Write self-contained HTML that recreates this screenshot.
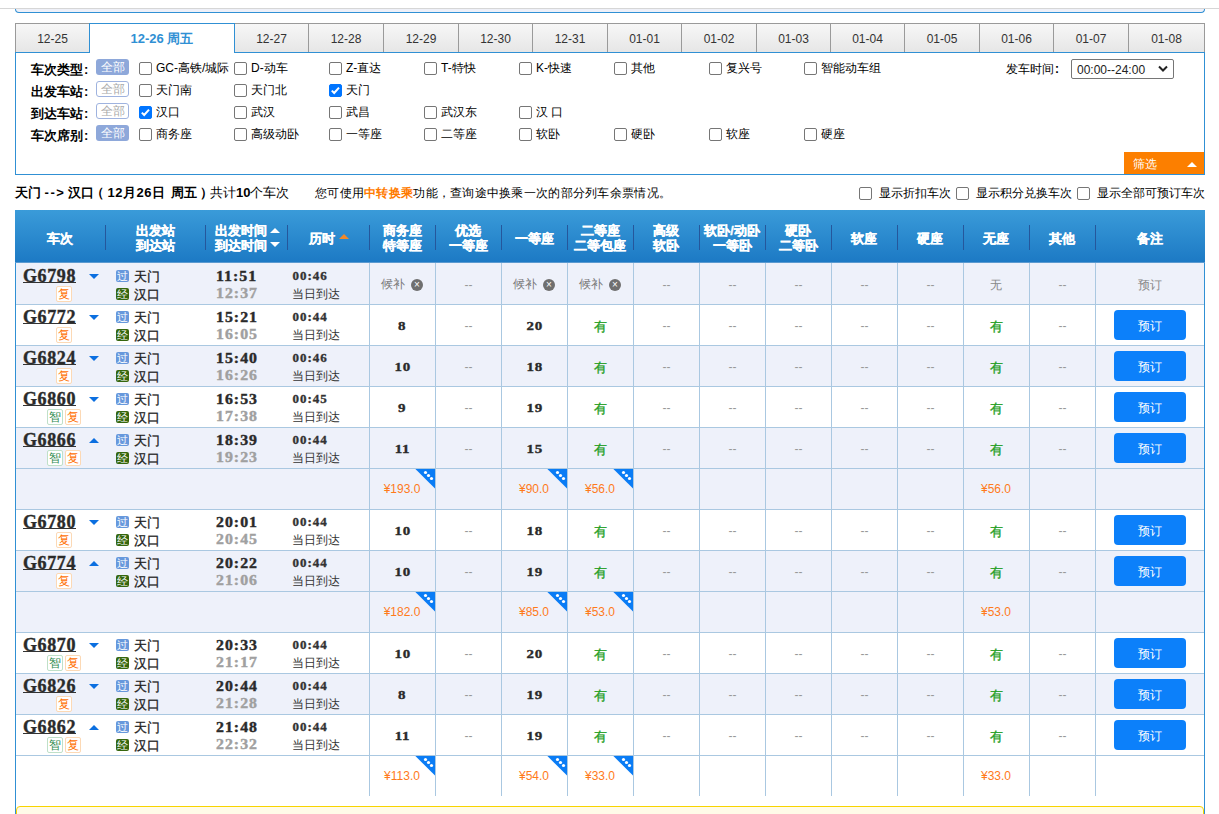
<!DOCTYPE html><html><head><meta charset='utf-8'><style>
*{margin:0;padding:0;box-sizing:border-box}
html,body{width:1219px;height:814px;overflow:hidden;background:#fff}
body{position:relative;font-family:'Liberation Sans',sans-serif;font-size:12px;color:#333}
.ab{position:absolute}
.tab{position:absolute;top:23px;height:29px;border-top:1px solid #9a9a9a;border-left:1px solid #9a9a9a;
 background:linear-gradient(#f7f7f7,#e6e6e6);text-align:center;line-height:30px;font-size:12px;color:#333}
.tab.act{background:#fff;border:1px solid #3090d4;border-bottom:none;height:30px;color:#3090d4;font-weight:bold;font-size:13px;z-index:2}
.lbl{position:absolute;left:30.5px;font-weight:bold;font-size:13px;color:#000;line-height:16px;letter-spacing:0px}
.all{position:absolute;left:96px;width:33px;height:16px;border-radius:3px;font-size:12px;line-height:16px;text-align:center}
.all.f{background:#8ea8da;color:#fff}
.all.o{border:1px solid #9fb3df;color:#aaa;line-height:14px}
.cb{position:absolute;width:13px;height:13px;border:1px solid #767676;border-radius:2px;background:#fff}
.cb.on{background:#0075ff;border-color:#0075ff}

.ct{position:absolute;font-size:12px;color:#000;line-height:16px;white-space:nowrap}
.hd{position:absolute;color:#fff;font-weight:bold;font-size:12.5px;line-height:15px;text-align:center;white-space:nowrap;-webkit-text-stroke:0.35px #fff}
.sep{position:absolute;top:225px;height:25px;width:1px;background:#25579c}
.row{position:absolute;left:16px;width:1188px}
.hl{position:absolute;left:16px;width:1188px;height:1px;background:#aac8e1}
.vl{position:absolute;width:1px;background:#aac8e1}
.tn{position:absolute;left:23px;font-family:'Liberation Serif',serif;font-weight:bold;font-size:18px;letter-spacing:0.6px;color:#2a2a2a;line-height:16px;-webkit-text-stroke:0.4px #2a2a2a}
.tri{position:absolute;left:89px;width:0;height:0;border-left:5px solid transparent;border-right:5px solid transparent}
.tri.d{border-top:5px solid #0b6fe0}
.tri.u{border-bottom:5px solid #0b6fe0}
.bdg{position:absolute;width:16px;height:16px;border:1px solid #fcd9b5;font-size:12px;line-height:14px;text-align:center;color:#ff7000;border-radius:2px;font-weight:500;background:#fff}
.bdg.g{border-color:#bfe0c8;color:#2e8b50}
.ic{position:absolute;left:116px;width:13px;height:12px;border-radius:2px;color:#fff;font-size:11px;line-height:12px;text-align:center}
.ic.b{background:#6798dc}
.ic.n{background:#35660e}
.st{position:absolute;left:133.5px;font-size:13px;color:#222;line-height:14px;letter-spacing:0.5px;-webkit-text-stroke:0.3px #222}
.t1{position:absolute;left:216px;font-family:'Liberation Serif',serif;font-weight:bold;font-size:14px;letter-spacing:0.9px;color:#2a2a2a;line-height:14px;-webkit-text-stroke:0.4px #2a2a2a;transform:scaleX(1.13);transform-origin:0 0}
.t2{position:absolute;left:216px;font-family:'Liberation Serif',serif;font-weight:bold;font-size:14px;letter-spacing:0.9px;color:#a0a0a0;line-height:14px;-webkit-text-stroke:0.4px #a0a0a0;transform:scaleX(1.13);transform-origin:0 0}
.du{position:absolute;left:292.5px;font-family:'Liberation Serif',serif;font-weight:bold;font-size:13px;letter-spacing:1px;-webkit-text-stroke:0.35px #333;color:#333;line-height:14px}
.dd{position:absolute;left:292px;font-size:12px;color:#333;line-height:14px}
.c{position:absolute;width:66px;text-align:center;line-height:14px}
.num{font-family:'Liberation Serif',serif;font-weight:bold;font-size:13px;color:#2a2a2a;letter-spacing:0.6px;text-indent:0.6px;padding-top:1px;-webkit-text-stroke:0.35px #2a2a2a}
.num span{display:inline-block;transform:scaleX(1.15)}
.dash{font-size:12px;color:#999;padding-top:1px;text-indent:1px}
.you{font-size:13px;color:#1e9e1e;padding-top:2px;-webkit-text-stroke:0.3px #1e9e1e}
.hb{font-size:12px;color:#777}
.pr{font-size:12px;color:#ff7a1a}
.x{display:inline-block;width:12px;height:12px;border-radius:50%;background:#6f6f6f;color:#fff;font-size:10px;line-height:12px;text-align:center;vertical-align:0px;margin-left:6px}
.corner{position:absolute;width:20px;height:20px;background:linear-gradient(to bottom left,#0a7cf5 50%,transparent 50%)}
.btn{position:absolute;left:1114px;width:72px;height:30px;background:#0c80fa;border-radius:4px;color:#fff;text-align:center;line-height:32px;font-size:12px}
</style></head><body>
<div class='ab' style='left:0;top:8px;width:1219px;height:1px;background:#d6d6d6'></div>
<div class='ab' style='left:15px;top:9px;width:1190px;height:4px;background:#eef0f8;border:1px solid #3090d4;border-top:none;border-radius:0 0 4px 4px'></div>
<div class='tab' style='left:15px;width:74px'>12-25</div>
<div class='tab act' style='left:89px;width:146px'>12-26 周五</div>
<div class='tab' style='left:234px;width:74px'>12-27</div>
<div class='tab' style='left:308px;width:75px'>12-28</div>
<div class='tab' style='left:383px;width:75px'>12-29</div>
<div class='tab' style='left:458px;width:74px'>12-30</div>
<div class='tab' style='left:532px;width:75px'>12-31</div>
<div class='tab' style='left:607px;width:74px'>01-01</div>
<div class='tab' style='left:681px;width:75px'>01-02</div>
<div class='tab' style='left:756px;width:74px'>01-03</div>
<div class='tab' style='left:830px;width:74px'>01-04</div>
<div class='tab' style='left:904px;width:75px'>01-05</div>
<div class='tab' style='left:979px;width:74px'>01-06</div>
<div class='tab' style='left:1053px;width:75px'>01-07</div>
<div class='tab' style='left:1128px;width:77px;border-right:1px solid #9a9a9a'>01-08</div>
<div class='ab' style='left:15px;top:52px;width:1190px;height:123px;border:1px solid #3090d4;border-top:1px solid #3090d4'></div>
<div class='lbl' style='top:61.5px'>车次类型<span style='margin-left:1.5px'>:</span></div>
<div class='all f' style='top:59px'>全部</div>
<div class='cb' style='left:139px;top:62px'></div>
<div class='ct' style='left:156px;top:60px'>GC-高铁/城际</div>
<div class='cb' style='left:234px;top:62px'></div>
<div class='ct' style='left:251px;top:60px'>D-动车</div>
<div class='cb' style='left:329px;top:62px'></div>
<div class='ct' style='left:346px;top:60px'>Z-直达</div>
<div class='cb' style='left:424px;top:62px'></div>
<div class='ct' style='left:441px;top:60px'>T-特快</div>
<div class='cb' style='left:519px;top:62px'></div>
<div class='ct' style='left:536px;top:60px'>K-快速</div>
<div class='cb' style='left:614px;top:62px'></div>
<div class='ct' style='left:631px;top:60px'>其他</div>
<div class='cb' style='left:709px;top:62px'></div>
<div class='ct' style='left:726px;top:60px'>复兴号</div>
<div class='cb' style='left:804px;top:62px'></div>
<div class='ct' style='left:821px;top:60px'>智能动车组</div>
<div class='lbl' style='top:83.5px'>出发车站<span style='margin-left:1.5px'>:</span></div>
<div class='all o' style='top:81px'>全部</div>
<div class='cb' style='left:139px;top:84px'></div>
<div class='ct' style='left:156px;top:82px'>天门南</div>
<div class='cb' style='left:234px;top:84px'></div>
<div class='ct' style='left:251px;top:82px'>天门北</div>
<div class='cb on' style='left:329px;top:84px'><svg width='13' height='13' style='position:absolute;left:-1px;top:-1px'><path d='M2.8 6.6 L5.2 9 L10 3.6' fill='none' stroke='#fff' stroke-width='2'/></svg></div>
<div class='ct' style='left:346px;top:82px'>天门</div>
<div class='lbl' style='top:105.5px'>到达车站<span style='margin-left:1.5px'>:</span></div>
<div class='all o' style='top:103px'>全部</div>
<div class='cb on' style='left:139px;top:106px'><svg width='13' height='13' style='position:absolute;left:-1px;top:-1px'><path d='M2.8 6.6 L5.2 9 L10 3.6' fill='none' stroke='#fff' stroke-width='2'/></svg></div>
<div class='ct' style='left:156px;top:104px'>汉口</div>
<div class='cb' style='left:234px;top:106px'></div>
<div class='ct' style='left:251px;top:104px'>武汉</div>
<div class='cb' style='left:329px;top:106px'></div>
<div class='ct' style='left:346px;top:104px'>武昌</div>
<div class='cb' style='left:424px;top:106px'></div>
<div class='ct' style='left:441px;top:104px'>武汉东</div>
<div class='cb' style='left:519px;top:106px'></div>
<div class='ct' style='left:536px;top:104px'>汉 口</div>
<div class='lbl' style='top:127.5px'>车次席别<span style='margin-left:1.5px'>:</span></div>
<div class='all f' style='top:125px'>全部</div>
<div class='cb' style='left:139px;top:128px'></div>
<div class='ct' style='left:156px;top:126px'>商务座</div>
<div class='cb' style='left:234px;top:128px'></div>
<div class='ct' style='left:251px;top:126px'>高级动卧</div>
<div class='cb' style='left:329px;top:128px'></div>
<div class='ct' style='left:346px;top:126px'>一等座</div>
<div class='cb' style='left:424px;top:128px'></div>
<div class='ct' style='left:441px;top:126px'>二等座</div>
<div class='cb' style='left:519px;top:128px'></div>
<div class='ct' style='left:536px;top:126px'>软卧</div>
<div class='cb' style='left:614px;top:128px'></div>
<div class='ct' style='left:631px;top:126px'>硬卧</div>
<div class='cb' style='left:709px;top:128px'></div>
<div class='ct' style='left:726px;top:126px'>软座</div>
<div class='cb' style='left:804px;top:128px'></div>
<div class='ct' style='left:821px;top:126px'>硬座</div>
<div class='ct' style='left:1006px;top:61px'>发车时间<span style='margin-left:1px;font-weight:bold'>:</span></div>
<div class='ab' style='left:1071px;top:59px;width:103px;height:20px;border:1px solid #767676;border-radius:2px;background:#fff;font-size:12px;line-height:20px;padding-left:5px;color:#222'>00:00--24:00</div>
<svg class='ab' style='left:1158px;top:65px' width='10' height='8'><path d='M1 1.5 L5 5.5 L9 1.5' fill='none' stroke='#222' stroke-width='2'/></svg>
<div class='ab' style='left:1124px;top:152px;width:80px;height:22px;background:#fc7f00;color:#fff;font-size:12px;line-height:24px;padding-left:9px'>筛选</div>
<div class='ab' style='left:1187px;top:162px;width:0;height:0;border-left:5px solid transparent;border-right:5px solid transparent;border-bottom:5px solid #fff'></div>
<div class='ab' style='left:15px;top:185px;font-size:13px;line-height:16px;color:#000;white-space:nowrap;'><b>天门</b></div>
<div class='ab' style='left:44.5px;top:185px;font-size:13px;line-height:16px;color:#000;white-space:nowrap;letter-spacing:1.6px'><b>--&gt;</b></div>
<div class='ab' style='left:67.5px;top:185px;font-size:13px;line-height:16px;color:#000;white-space:nowrap;'><b>汉口<span style='margin-left:-2.5px'>（</span></b></div>
<div class='ab' style='left:107.5px;top:185px;font-size:13px;line-height:16px;color:#000;white-space:nowrap;letter-spacing:0.5px'><b>12月26日</b></div>
<div class='ab' style='left:171px;top:185px;font-size:13px;line-height:16px;color:#000;white-space:nowrap;'><b>周五<span style='margin-left:2.5px'>）</span></b></div>
<div class='ab' style='left:210px;top:185px;font-size:13px;line-height:16px;color:#000;white-space:nowrap;'>共计<b>10</b>个车次</div>
<div class='ab' style='left:315px;top:185px;font-size:12px;line-height:16px;color:#000;white-space:nowrap;letter-spacing:0.28px'>您可使用<b style='color:#ff7b00'>中转换乘</b>功能，查询途中换乘一次的部分列车余票情况。</div>
<div class='cb' style='left:859px;top:187px'></div>
<div class='ct' style='left:879px;top:185px'>显示折扣车次</div>
<div class='cb' style='left:956px;top:187px'></div>
<div class='ct' style='left:976px;top:185px'>显示积分兑换车次</div>
<div class='cb' style='left:1077px;top:187px'></div>
<div class='ct' style='left:1097px;top:185px'>显示全部可预订车次</div>
<div class='ab' style='left:15px;top:210px;width:1190px;height:53px;background:linear-gradient(#3a9bd9,#1c79c4)'></div>
<div class='ab' style='left:15px;top:262px;width:1190px;height:1px;background:#5b9ad0'></div>
<div class='hd' style='left:15px;width:90px;top:232px'>车次</div>
<div class='hd' style='left:105px;width:100px;top:223.5px'>出发站<br>到达站</div>
<div class='sep' style='left:105px'></div>
<div class='hd' style='left:200px;width:82px;top:223.5px'>出发时间<br>到达时间</div>
<div class='sep' style='left:205px'></div>
<div class='hd' style='left:281px;width:82px;top:232px'>历时</div>
<div class='sep' style='left:287px'></div>
<div class='hd' style='left:369px;width:66px;top:223.5px'>商务座<br>特等座</div>
<div class='sep' style='left:369px'></div>
<div class='hd' style='left:435px;width:66px;top:223.5px'>优选<br>一等座</div>
<div class='sep' style='left:435px'></div>
<div class='hd' style='left:501px;width:66px;top:232px'>一等座</div>
<div class='sep' style='left:501px'></div>
<div class='hd' style='left:567px;width:66px;top:223.5px'>二等座<br>二等包座</div>
<div class='sep' style='left:567px'></div>
<div class='hd' style='left:633px;width:66px;top:223.5px'>高级<br>软卧</div>
<div class='sep' style='left:633px'></div>
<div class='hd' style='left:699px;width:66px;top:223.5px'>软卧/动卧<br>一等卧</div>
<div class='sep' style='left:699px'></div>
<div class='hd' style='left:765px;width:66px;top:223.5px'>硬卧<br>二等卧</div>
<div class='sep' style='left:765px'></div>
<div class='hd' style='left:831px;width:66px;top:232px'>软座</div>
<div class='sep' style='left:831px'></div>
<div class='hd' style='left:897px;width:66px;top:232px'>硬座</div>
<div class='sep' style='left:897px'></div>
<div class='hd' style='left:963px;width:66px;top:232px'>无座</div>
<div class='sep' style='left:963px'></div>
<div class='hd' style='left:1029px;width:66px;top:232px'>其他</div>
<div class='sep' style='left:1029px'></div>
<div class='hd' style='left:1095px;width:110px;top:232px'>备注</div>
<div class='sep' style='left:1095px'></div>
<div class='ab' style='left:270px;top:228px;width:0;height:0;border-left:5px solid transparent;border-right:5px solid transparent;border-bottom:5px solid #fff'></div>
<div class='ab' style='left:270px;top:242px;width:0;height:0;border-left:5px solid transparent;border-right:5px solid transparent;border-top:5px solid #fff'></div>
<div class='ab' style='left:339px;top:234px;width:0;height:0;border-left:5px solid transparent;border-right:5px solid transparent;border-bottom:5px solid #f0892a'></div>
<div class='row' style='top:263px;height:41px;background:#eef1fa'></div>
<div class='hl' style='top:304px'></div>
<div class='tn' style='top:268px'>G6798</div>
<div class='ab' style='left:23px;width:53px;height:1px;background:#333;top:282px'></div>
<div class='tri d' style='top:274px'></div>
<div class='bdg' style='left:56px;top:286px'>复</div>
<div class='ic b' style='top:270px'>过</div>
<div class='st' style='top:270px'>天门</div>
<div class='ic n' style='top:288px'>经</div>
<div class='st' style='top:288px'>汉口</div>
<div class='t1' style='top:270px'>11:51</div>
<div class='t2' style='top:287px'>12:37</div>
<div class='du' style='top:269px'>00:46</div>
<div class='dd' style='top:287px'>当日到达</div>
<div class='c hb' style='left:369px;top:277px'>候补<span class='x'>×</span></div>
<div class='c dash' style='left:435px;top:277px'>--</div>
<div class='c hb' style='left:501px;top:277px'>候补<span class='x'>×</span></div>
<div class='c hb' style='left:567px;top:277px'>候补<span class='x'>×</span></div>
<div class='c dash' style='left:633px;top:277px'>--</div>
<div class='c dash' style='left:699px;top:277px'>--</div>
<div class='c dash' style='left:765px;top:277px'>--</div>
<div class='c dash' style='left:831px;top:277px'>--</div>
<div class='c dash' style='left:897px;top:277px'>--</div>
<div class='c hb' style='left:963px;top:278px;color:#888'>无</div>
<div class='c dash' style='left:1029px;top:277px'>--</div>
<div class='ab hb' style='left:1095px;width:110px;text-align:center;top:278px;line-height:14px;color:#888'>预订</div>
<div class='row' style='top:305px;height:40px;background:#fff'></div>
<div class='hl' style='top:345px'></div>
<div class='tn' style='top:309px'>G6772</div>
<div class='ab' style='left:23px;width:53px;height:1px;background:#333;top:323px'></div>
<div class='tri d' style='top:315px'></div>
<div class='bdg' style='left:56px;top:327px'>复</div>
<div class='ic b' style='top:311px'>过</div>
<div class='st' style='top:311px'>天门</div>
<div class='ic n' style='top:329px'>经</div>
<div class='st' style='top:329px'>汉口</div>
<div class='t1' style='top:311px'>15:21</div>
<div class='t2' style='top:328px'>16:05</div>
<div class='du' style='top:310px'>00:44</div>
<div class='dd' style='top:328px'>当日到达</div>
<div class='c num' style='left:369px;top:318px'><span>8</span></div>
<div class='c dash' style='left:435px;top:318px'>--</div>
<div class='c num' style='left:501px;top:318px'><span>20</span></div>
<div class='c you' style='left:567px;top:318px'>有</div>
<div class='c dash' style='left:633px;top:318px'>--</div>
<div class='c dash' style='left:699px;top:318px'>--</div>
<div class='c dash' style='left:765px;top:318px'>--</div>
<div class='c dash' style='left:831px;top:318px'>--</div>
<div class='c dash' style='left:897px;top:318px'>--</div>
<div class='c you' style='left:963px;top:318px'>有</div>
<div class='c dash' style='left:1029px;top:318px'>--</div>
<div class='btn' style='top:310px'>预订</div>
<div class='row' style='top:346px;height:40px;background:#eef1fa'></div>
<div class='hl' style='top:386px'></div>
<div class='tn' style='top:350px'>G6824</div>
<div class='ab' style='left:23px;width:53px;height:1px;background:#333;top:364px'></div>
<div class='tri d' style='top:356px'></div>
<div class='bdg' style='left:56px;top:368px'>复</div>
<div class='ic b' style='top:352px'>过</div>
<div class='st' style='top:352px'>天门</div>
<div class='ic n' style='top:370px'>经</div>
<div class='st' style='top:370px'>汉口</div>
<div class='t1' style='top:352px'>15:40</div>
<div class='t2' style='top:369px'>16:26</div>
<div class='du' style='top:351px'>00:46</div>
<div class='dd' style='top:369px'>当日到达</div>
<div class='c num' style='left:369px;top:359px'><span>10</span></div>
<div class='c dash' style='left:435px;top:359px'>--</div>
<div class='c num' style='left:501px;top:359px'><span>18</span></div>
<div class='c you' style='left:567px;top:359px'>有</div>
<div class='c dash' style='left:633px;top:359px'>--</div>
<div class='c dash' style='left:699px;top:359px'>--</div>
<div class='c dash' style='left:765px;top:359px'>--</div>
<div class='c dash' style='left:831px;top:359px'>--</div>
<div class='c dash' style='left:897px;top:359px'>--</div>
<div class='c you' style='left:963px;top:359px'>有</div>
<div class='c dash' style='left:1029px;top:359px'>--</div>
<div class='btn' style='top:351px'>预订</div>
<div class='row' style='top:387px;height:40px;background:#fff'></div>
<div class='hl' style='top:427px'></div>
<div class='tn' style='top:391px'>G6860</div>
<div class='ab' style='left:23px;width:53px;height:1px;background:#333;top:405px'></div>
<div class='tri d' style='top:397px'></div>
<div class='bdg g' style='left:47px;top:409px'>智</div>
<div class='bdg' style='left:65px;top:409px'>复</div>
<div class='ic b' style='top:393px'>过</div>
<div class='st' style='top:393px'>天门</div>
<div class='ic n' style='top:411px'>经</div>
<div class='st' style='top:411px'>汉口</div>
<div class='t1' style='top:393px'>16:53</div>
<div class='t2' style='top:410px'>17:38</div>
<div class='du' style='top:392px'>00:45</div>
<div class='dd' style='top:410px'>当日到达</div>
<div class='c num' style='left:369px;top:400px'><span>9</span></div>
<div class='c dash' style='left:435px;top:400px'>--</div>
<div class='c num' style='left:501px;top:400px'><span>19</span></div>
<div class='c you' style='left:567px;top:400px'>有</div>
<div class='c dash' style='left:633px;top:400px'>--</div>
<div class='c dash' style='left:699px;top:400px'>--</div>
<div class='c dash' style='left:765px;top:400px'>--</div>
<div class='c dash' style='left:831px;top:400px'>--</div>
<div class='c dash' style='left:897px;top:400px'>--</div>
<div class='c you' style='left:963px;top:400px'>有</div>
<div class='c dash' style='left:1029px;top:400px'>--</div>
<div class='btn' style='top:392px'>预订</div>
<div class='row' style='top:428px;height:40px;background:#eef1fa'></div>
<div class='hl' style='top:468px'></div>
<div class='tn' style='top:432px'>G6866</div>
<div class='ab' style='left:23px;width:53px;height:1px;background:#333;top:446px'></div>
<div class='tri u' style='top:438px'></div>
<div class='bdg g' style='left:47px;top:450px'>智</div>
<div class='bdg' style='left:65px;top:450px'>复</div>
<div class='ic b' style='top:434px'>过</div>
<div class='st' style='top:434px'>天门</div>
<div class='ic n' style='top:452px'>经</div>
<div class='st' style='top:452px'>汉口</div>
<div class='t1' style='top:434px'>18:39</div>
<div class='t2' style='top:451px'>19:23</div>
<div class='du' style='top:433px'>00:44</div>
<div class='dd' style='top:451px'>当日到达</div>
<div class='c num' style='left:369px;top:441px'><span>11</span></div>
<div class='c dash' style='left:435px;top:441px'>--</div>
<div class='c num' style='left:501px;top:441px'><span>15</span></div>
<div class='c you' style='left:567px;top:441px'>有</div>
<div class='c dash' style='left:633px;top:441px'>--</div>
<div class='c dash' style='left:699px;top:441px'>--</div>
<div class='c dash' style='left:765px;top:441px'>--</div>
<div class='c dash' style='left:831px;top:441px'>--</div>
<div class='c dash' style='left:897px;top:441px'>--</div>
<div class='c you' style='left:963px;top:441px'>有</div>
<div class='c dash' style='left:1029px;top:441px'>--</div>
<div class='btn' style='top:433px'>预订</div>
<div class='row' style='top:469px;height:40px;background:#eef1fa'></div>
<div class='hl' style='top:509px'></div>
<div class='c pr' style='left:369px;top:482px'>¥193.0</div>
<svg class='ab' style='left:415px;top:469px' width='20' height='20'><polygon points='0.4,0 20,0 20,19.6' fill='#0a7cf5'/><circle cx='10.5' cy='3.5' r='1.6' fill='#fff'/><circle cx='13.5' cy='6.5' r='1.6' fill='#fff'/><circle cx='16.5' cy='9.5' r='1.6' fill='#fff'/></svg>
<div class='c pr' style='left:501px;top:482px'>¥90.0</div>
<svg class='ab' style='left:547px;top:469px' width='20' height='20'><polygon points='0.4,0 20,0 20,19.6' fill='#0a7cf5'/><circle cx='10.5' cy='3.5' r='1.6' fill='#fff'/><circle cx='13.5' cy='6.5' r='1.6' fill='#fff'/><circle cx='16.5' cy='9.5' r='1.6' fill='#fff'/></svg>
<div class='c pr' style='left:567px;top:482px'>¥56.0</div>
<svg class='ab' style='left:613px;top:469px' width='20' height='20'><polygon points='0.4,0 20,0 20,19.6' fill='#0a7cf5'/><circle cx='10.5' cy='3.5' r='1.6' fill='#fff'/><circle cx='13.5' cy='6.5' r='1.6' fill='#fff'/><circle cx='16.5' cy='9.5' r='1.6' fill='#fff'/></svg>
<div class='c pr' style='left:963px;top:482px'>¥56.0</div>
<div class='row' style='top:510px;height:40px;background:#fff'></div>
<div class='hl' style='top:550px'></div>
<div class='tn' style='top:514px'>G6780</div>
<div class='ab' style='left:23px;width:53px;height:1px;background:#333;top:528px'></div>
<div class='tri d' style='top:520px'></div>
<div class='bdg' style='left:56px;top:532px'>复</div>
<div class='ic b' style='top:516px'>过</div>
<div class='st' style='top:516px'>天门</div>
<div class='ic n' style='top:534px'>经</div>
<div class='st' style='top:534px'>汉口</div>
<div class='t1' style='top:516px'>20:01</div>
<div class='t2' style='top:533px'>20:45</div>
<div class='du' style='top:515px'>00:44</div>
<div class='dd' style='top:533px'>当日到达</div>
<div class='c num' style='left:369px;top:523px'><span>10</span></div>
<div class='c dash' style='left:435px;top:523px'>--</div>
<div class='c num' style='left:501px;top:523px'><span>18</span></div>
<div class='c you' style='left:567px;top:523px'>有</div>
<div class='c dash' style='left:633px;top:523px'>--</div>
<div class='c dash' style='left:699px;top:523px'>--</div>
<div class='c dash' style='left:765px;top:523px'>--</div>
<div class='c dash' style='left:831px;top:523px'>--</div>
<div class='c dash' style='left:897px;top:523px'>--</div>
<div class='c you' style='left:963px;top:523px'>有</div>
<div class='c dash' style='left:1029px;top:523px'>--</div>
<div class='btn' style='top:515px'>预订</div>
<div class='row' style='top:551px;height:40px;background:#eef1fa'></div>
<div class='hl' style='top:591px'></div>
<div class='tn' style='top:555px'>G6774</div>
<div class='ab' style='left:23px;width:53px;height:1px;background:#333;top:569px'></div>
<div class='tri u' style='top:561px'></div>
<div class='bdg' style='left:56px;top:573px'>复</div>
<div class='ic b' style='top:557px'>过</div>
<div class='st' style='top:557px'>天门</div>
<div class='ic n' style='top:575px'>经</div>
<div class='st' style='top:575px'>汉口</div>
<div class='t1' style='top:557px'>20:22</div>
<div class='t2' style='top:574px'>21:06</div>
<div class='du' style='top:556px'>00:44</div>
<div class='dd' style='top:574px'>当日到达</div>
<div class='c num' style='left:369px;top:564px'><span>10</span></div>
<div class='c dash' style='left:435px;top:564px'>--</div>
<div class='c num' style='left:501px;top:564px'><span>19</span></div>
<div class='c you' style='left:567px;top:564px'>有</div>
<div class='c dash' style='left:633px;top:564px'>--</div>
<div class='c dash' style='left:699px;top:564px'>--</div>
<div class='c dash' style='left:765px;top:564px'>--</div>
<div class='c dash' style='left:831px;top:564px'>--</div>
<div class='c dash' style='left:897px;top:564px'>--</div>
<div class='c you' style='left:963px;top:564px'>有</div>
<div class='c dash' style='left:1029px;top:564px'>--</div>
<div class='btn' style='top:556px'>预订</div>
<div class='row' style='top:592px;height:40px;background:#eef1fa'></div>
<div class='hl' style='top:632px'></div>
<div class='c pr' style='left:369px;top:605px'>¥182.0</div>
<svg class='ab' style='left:415px;top:592px' width='20' height='20'><polygon points='0.4,0 20,0 20,19.6' fill='#0a7cf5'/><circle cx='10.5' cy='3.5' r='1.6' fill='#fff'/><circle cx='13.5' cy='6.5' r='1.6' fill='#fff'/><circle cx='16.5' cy='9.5' r='1.6' fill='#fff'/></svg>
<div class='c pr' style='left:501px;top:605px'>¥85.0</div>
<svg class='ab' style='left:547px;top:592px' width='20' height='20'><polygon points='0.4,0 20,0 20,19.6' fill='#0a7cf5'/><circle cx='10.5' cy='3.5' r='1.6' fill='#fff'/><circle cx='13.5' cy='6.5' r='1.6' fill='#fff'/><circle cx='16.5' cy='9.5' r='1.6' fill='#fff'/></svg>
<div class='c pr' style='left:567px;top:605px'>¥53.0</div>
<svg class='ab' style='left:613px;top:592px' width='20' height='20'><polygon points='0.4,0 20,0 20,19.6' fill='#0a7cf5'/><circle cx='10.5' cy='3.5' r='1.6' fill='#fff'/><circle cx='13.5' cy='6.5' r='1.6' fill='#fff'/><circle cx='16.5' cy='9.5' r='1.6' fill='#fff'/></svg>
<div class='c pr' style='left:963px;top:605px'>¥53.0</div>
<div class='row' style='top:633px;height:40px;background:#fff'></div>
<div class='hl' style='top:673px'></div>
<div class='tn' style='top:637px'>G6870</div>
<div class='ab' style='left:23px;width:53px;height:1px;background:#333;top:651px'></div>
<div class='tri d' style='top:643px'></div>
<div class='bdg g' style='left:47px;top:655px'>智</div>
<div class='bdg' style='left:65px;top:655px'>复</div>
<div class='ic b' style='top:639px'>过</div>
<div class='st' style='top:639px'>天门</div>
<div class='ic n' style='top:657px'>经</div>
<div class='st' style='top:657px'>汉口</div>
<div class='t1' style='top:639px'>20:33</div>
<div class='t2' style='top:656px'>21:17</div>
<div class='du' style='top:638px'>00:44</div>
<div class='dd' style='top:656px'>当日到达</div>
<div class='c num' style='left:369px;top:646px'><span>10</span></div>
<div class='c dash' style='left:435px;top:646px'>--</div>
<div class='c num' style='left:501px;top:646px'><span>20</span></div>
<div class='c you' style='left:567px;top:646px'>有</div>
<div class='c dash' style='left:633px;top:646px'>--</div>
<div class='c dash' style='left:699px;top:646px'>--</div>
<div class='c dash' style='left:765px;top:646px'>--</div>
<div class='c dash' style='left:831px;top:646px'>--</div>
<div class='c dash' style='left:897px;top:646px'>--</div>
<div class='c you' style='left:963px;top:646px'>有</div>
<div class='c dash' style='left:1029px;top:646px'>--</div>
<div class='btn' style='top:638px'>预订</div>
<div class='row' style='top:674px;height:40px;background:#eef1fa'></div>
<div class='hl' style='top:714px'></div>
<div class='tn' style='top:678px'>G6826</div>
<div class='ab' style='left:23px;width:53px;height:1px;background:#333;top:692px'></div>
<div class='tri d' style='top:684px'></div>
<div class='bdg' style='left:56px;top:696px'>复</div>
<div class='ic b' style='top:680px'>过</div>
<div class='st' style='top:680px'>天门</div>
<div class='ic n' style='top:698px'>经</div>
<div class='st' style='top:698px'>汉口</div>
<div class='t1' style='top:680px'>20:44</div>
<div class='t2' style='top:697px'>21:28</div>
<div class='du' style='top:679px'>00:44</div>
<div class='dd' style='top:697px'>当日到达</div>
<div class='c num' style='left:369px;top:687px'><span>8</span></div>
<div class='c dash' style='left:435px;top:687px'>--</div>
<div class='c num' style='left:501px;top:687px'><span>19</span></div>
<div class='c you' style='left:567px;top:687px'>有</div>
<div class='c dash' style='left:633px;top:687px'>--</div>
<div class='c dash' style='left:699px;top:687px'>--</div>
<div class='c dash' style='left:765px;top:687px'>--</div>
<div class='c dash' style='left:831px;top:687px'>--</div>
<div class='c dash' style='left:897px;top:687px'>--</div>
<div class='c you' style='left:963px;top:687px'>有</div>
<div class='c dash' style='left:1029px;top:687px'>--</div>
<div class='btn' style='top:679px'>预订</div>
<div class='row' style='top:715px;height:40px;background:#fff'></div>
<div class='hl' style='top:755px'></div>
<div class='tn' style='top:719px'>G6862</div>
<div class='ab' style='left:23px;width:53px;height:1px;background:#333;top:733px'></div>
<div class='tri u' style='top:725px'></div>
<div class='bdg g' style='left:47px;top:737px'>智</div>
<div class='bdg' style='left:65px;top:737px'>复</div>
<div class='ic b' style='top:721px'>过</div>
<div class='st' style='top:721px'>天门</div>
<div class='ic n' style='top:739px'>经</div>
<div class='st' style='top:739px'>汉口</div>
<div class='t1' style='top:721px'>21:48</div>
<div class='t2' style='top:738px'>22:32</div>
<div class='du' style='top:720px'>00:44</div>
<div class='dd' style='top:738px'>当日到达</div>
<div class='c num' style='left:369px;top:728px'><span>11</span></div>
<div class='c dash' style='left:435px;top:728px'>--</div>
<div class='c num' style='left:501px;top:728px'><span>19</span></div>
<div class='c you' style='left:567px;top:728px'>有</div>
<div class='c dash' style='left:633px;top:728px'>--</div>
<div class='c dash' style='left:699px;top:728px'>--</div>
<div class='c dash' style='left:765px;top:728px'>--</div>
<div class='c dash' style='left:831px;top:728px'>--</div>
<div class='c dash' style='left:897px;top:728px'>--</div>
<div class='c you' style='left:963px;top:728px'>有</div>
<div class='c dash' style='left:1029px;top:728px'>--</div>
<div class='btn' style='top:720px'>预订</div>
<div class='row' style='top:756px;height:40px;background:#fff'></div>
<div class='c pr' style='left:369px;top:769px'>¥113.0</div>
<svg class='ab' style='left:415px;top:756px' width='20' height='20'><polygon points='0.4,0 20,0 20,19.6' fill='#0a7cf5'/><circle cx='10.5' cy='3.5' r='1.6' fill='#fff'/><circle cx='13.5' cy='6.5' r='1.6' fill='#fff'/><circle cx='16.5' cy='9.5' r='1.6' fill='#fff'/></svg>
<div class='c pr' style='left:501px;top:769px'>¥54.0</div>
<svg class='ab' style='left:547px;top:756px' width='20' height='20'><polygon points='0.4,0 20,0 20,19.6' fill='#0a7cf5'/><circle cx='10.5' cy='3.5' r='1.6' fill='#fff'/><circle cx='13.5' cy='6.5' r='1.6' fill='#fff'/><circle cx='16.5' cy='9.5' r='1.6' fill='#fff'/></svg>
<div class='c pr' style='left:567px;top:769px'>¥33.0</div>
<svg class='ab' style='left:613px;top:756px' width='20' height='20'><polygon points='0.4,0 20,0 20,19.6' fill='#0a7cf5'/><circle cx='10.5' cy='3.5' r='1.6' fill='#fff'/><circle cx='13.5' cy='6.5' r='1.6' fill='#fff'/><circle cx='16.5' cy='9.5' r='1.6' fill='#fff'/></svg>
<div class='c pr' style='left:963px;top:769px'>¥33.0</div>
<div class='vl' style='left:369px;top:263px;height:533px'></div>
<div class='vl' style='left:435px;top:263px;height:533px'></div>
<div class='vl' style='left:501px;top:263px;height:533px'></div>
<div class='vl' style='left:567px;top:263px;height:533px'></div>
<div class='vl' style='left:633px;top:263px;height:533px'></div>
<div class='vl' style='left:699px;top:263px;height:533px'></div>
<div class='vl' style='left:765px;top:263px;height:533px'></div>
<div class='vl' style='left:831px;top:263px;height:533px'></div>
<div class='vl' style='left:897px;top:263px;height:533px'></div>
<div class='vl' style='left:963px;top:263px;height:533px'></div>
<div class='vl' style='left:1029px;top:263px;height:533px'></div>
<div class='vl' style='left:1095px;top:263px;height:533px'></div>
<div class='ab' style='left:15px;top:263px;width:1px;height:551px;background:#3090d4'></div>
<div class='ab' style='left:1204px;top:263px;width:1px;height:551px;background:#3090d4'></div>
<div class='ab' style='left:16px;top:806px;width:1188px;height:20px;background:#fffbe8;border:1px solid #f8d400;border-radius:4px'></div>
</body></html>
